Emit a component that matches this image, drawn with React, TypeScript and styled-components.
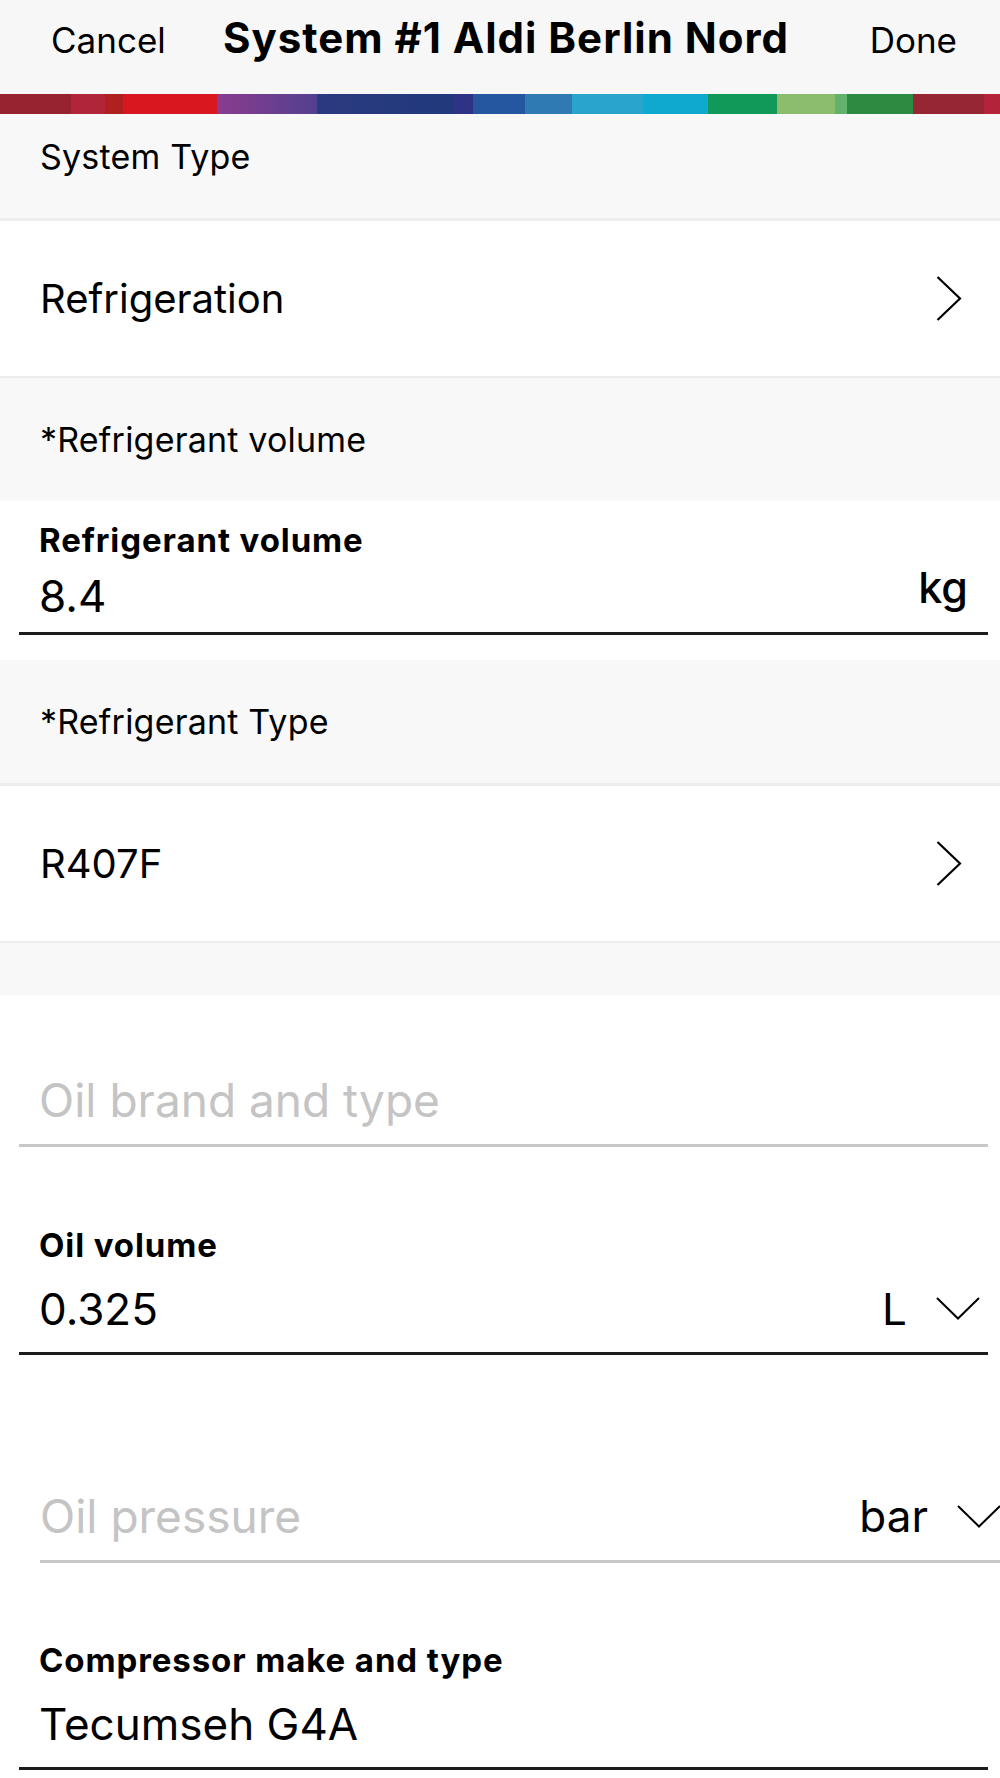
import React from "react";
import styled, { createGlobalStyle } from "styled-components";

const GlobalStyle = createGlobalStyle`
  html, body { margin: 0; padding: 0; background: #ffffff; }
  body {
    font-family: Inter, "Noto Sans", "Liberation Sans", sans-serif;
    color: #000000;
    -webkit-font-smoothing: antialiased;
  }
  * { box-sizing: border-box; }
`;

const Page = styled.div`
  width: 1000px;
  min-height: 1778px;
  overflow: hidden;
  background: #ffffff;
`;

const NavBar = styled.header`
  height: 94px;
  background: #f7f7f7;
  display: grid;
  grid-template-columns: 1fr auto 1fr;
  align-items: baseline;
  padding: 13px 43px 0 51px;
`;

const NavButton = styled.span<{ $align: "start" | "end" }>`
  justify-self: ${(p) => p.$align};
  font-size: 35px;
  line-height: 50px;
  font-weight: 400;
`;

const NavTitle = styled.h1`
  margin: 0 0 0 4px;
  font-size: 42px;
  line-height: 50px;
  font-weight: 700;
  letter-spacing: 1px;
  white-space: nowrap;
`;

const Supergraphic = styled.div`
  height: 20px;
  background: linear-gradient(
    to right,
    #972331 0px 71px,
    #b02539 71px 105px,
    #b0201f 105px 123px,
    #d8171e 123px 217px,
    #8b3b8f 217px,
    #52418f 317px,
    #2b3a80 317px,
    #21397c 453px,
    #2e3386 453px 473px,
    #2556a0 473px 525px,
    #2f7ab3 525px 572px,
    #28a4cd 572px 643px,
    #0fa9d0 643px 708px,
    #11995a 708px 777px,
    #8cbd6c 777px 835px,
    #62b26b 835px 847px,
    #2c8b41 847px 913px,
    #962634 913px 984px,
    #b3243a 984px 1000px
  );
`;

const SectionHeader = styled.div<{ $height: number; $lift?: number; $divider?: boolean }>`
  height: ${(p) => p.$height}px;
  background: #f8f8f8;
  display: flex;
  align-items: center;
  padding: 0 40px ${(p) => p.$lift ?? 0}px 40px;
  font-size: 34px;
  font-weight: 400;
  letter-spacing: 0.2px;
  border-bottom: ${(p) => (p.$divider ? "3px solid #ededed" : "none")};
`;

const SelectRow = styled.div`
  height: 157px;
  background: #ffffff;
  border-bottom: 2px solid #ededed;
  display: flex;
  align-items: center;
  justify-content: space-between;
  padding: 0 38px 0 40px;
  font-size: 40px;
`;

const Spacer = styled.div<{ $height: number }>`
  height: ${(p) => p.$height}px;
  background: #f8f8f8;
`;

const Field = styled.div<{
  $top: number;
  $shifted?: boolean;
  $muted?: boolean;
  $padRight: number;
  $gapBelow?: number;
}>`
  width: 969px;
  margin: 0 0 ${(p) => p.$gapBelow ?? 0}px ${(p) => (p.$shifted ? 40 : 19)}px;
  padding: ${(p) => p.$top}px ${(p) => p.$padRight}px 0 ${(p) => (p.$shifted ? 0 : 20)}px;
  border-bottom: ${(p) => (p.$muted ? "3px solid #c8c8c8" : "3px solid #1c1c1c")};
`;

const FieldLabel = styled.div`
  font-size: 33px;
  line-height: 40px;
  font-weight: 700;
  letter-spacing: 0.9px;
`;

const ValueRow = styled.div<{ $height: number }>`
  height: ${(p) => p.$height}px;
  display: flex;
  align-items: center;
  justify-content: space-between;
`;

const Value = styled.span<{ $placeholder?: boolean }>`
  font-size: ${(p) => (p.$placeholder ? 46 : 44)}px;
  color: ${(p) => (p.$placeholder ? "#c4c4c4" : "#000000")};
  white-space: nowrap;
`;

const UnitGroup = styled.span`
  display: flex;
  align-items: center;
  gap: 29px;
`;

const Unit = styled.span<{ $raised?: boolean }>`
  font-size: ${(p) => (p.$raised ? 43 : 44)}px;
  font-weight: ${(p) => (p.$raised ? 500 : 400)};
  align-self: ${(p) => (p.$raised ? "flex-start" : "center")};
  padding-top: ${(p) => (p.$raised ? 1 : 0)}px;
`;

const ChevronRight = () => (
  <svg width="26" height="45" viewBox="0 0 26 45" fill="none">
    <polyline points="1.5,1 24,22.5 1.5,44" stroke="#000" strokeWidth="2.2" strokeLinejoin="miter" />
  </svg>
);

const ChevronDown = () => (
  <svg width="44" height="23" viewBox="0 0 44 23" fill="none">
    <polyline points="1,1 22,21.5 43,1" stroke="#000" strokeWidth="2" />
  </svg>
);

export default function App() {
  return (
    <Page>
      <GlobalStyle />
      <NavBar>
        <NavButton $align="start">Cancel</NavButton>
        <NavTitle>System #1 Aldi Berlin Nord</NavTitle>
        <NavButton $align="end">Done</NavButton>
      </NavBar>
      <Supergraphic />

      <SectionHeader $height={107} $lift={19} $divider>
        System Type
      </SectionHeader>
      <SelectRow>
        <span>Refrigeration</span>
        <ChevronRight />
      </SelectRow>

      <SectionHeader $height={123}>*Refrigerant volume</SectionHeader>
      <Field $top={19} $padRight={20} $gapBelow={25}>
        <FieldLabel>Refrigerant volume</FieldLabel>
        <ValueRow $height={72}>
          <Value>8.4</Value>
          <Unit $raised>kg</Unit>
        </ValueRow>
      </Field>

      <SectionHeader $height={126} $divider>
        *Refrigerant Type
      </SectionHeader>
      <SelectRow>
        <span>R407F</span>
        <ChevronRight />
      </SelectRow>
      <Spacer $height={52} />

      <Field $top={61} $padRight={20} $muted>
        <ValueRow $height={88}>
          <Value $placeholder>Oil brand and type</Value>
        </ValueRow>
      </Field>

      <Field $top={78} $padRight={8}>
        <FieldLabel>Oil volume</FieldLabel>
        <ValueRow $height={87}>
          <Value>0.325</Value>
          <UnitGroup>
            <Unit>L</Unit>
            <ChevronDown />
          </UnitGroup>
        </ValueRow>
      </Field>

      <Field $top={117} $padRight={8} $muted $shifted>
        <ValueRow $height={88}>
          <Value $placeholder>Oil pressure</Value>
          <UnitGroup>
            <Unit>bar</Unit>
            <ChevronDown />
          </UnitGroup>
        </ValueRow>
      </Field>

      <Field $top={77} $padRight={20}>
        <FieldLabel>Compressor make and type</FieldLabel>
        <ValueRow $height={87}>
          <Value>Tecumseh G4A</Value>
        </ValueRow>
      </Field>
    </Page>
  );
}
